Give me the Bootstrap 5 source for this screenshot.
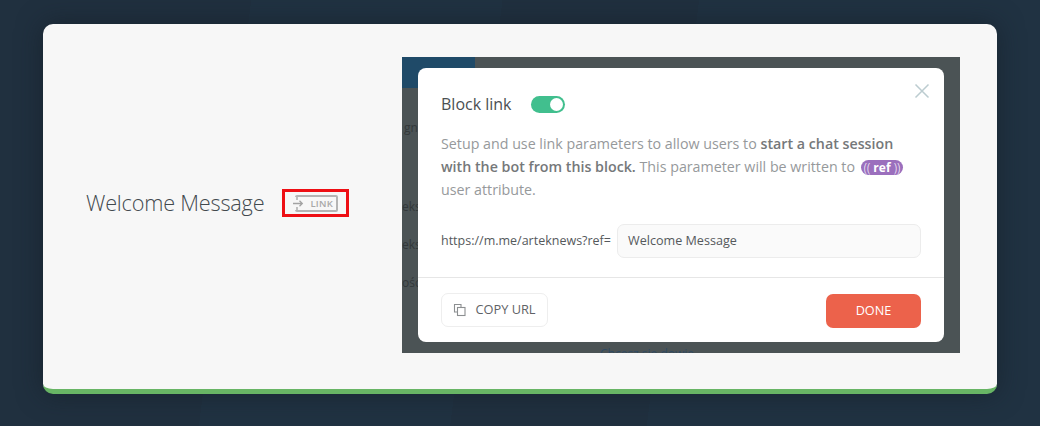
<!DOCTYPE html>
<html lang="en">
<head>
  <meta charset="UTF-8" />
  <meta name="viewport" content="width=device-width, initial-scale=1" />
  <title>Block link</title>
  <link href="https://cdn.jsdelivr.net/npm/bootstrap@5.3.3/dist/css/bootstrap.min.css" rel="stylesheet" />
  <style>
    body { background: linear-gradient(97deg, #20303f 0 23%, #203242 23% 46%, #20303f 46% 64%, #203242 64% 100%); font-family: "Open Sans", "Noto Sans", sans-serif; height: 426px; overflow: hidden; padding: 24px 43px 0; }
    .slide { height: 370px; width: 954px; background: #f7f7f7; border-bottom: 5px solid #68b565; border-radius: 10px; box-shadow: 0 0 26px rgba(20,28,36,.6); padding: 33px 37px 0 43px; }
    .title-text { font-size: 21.7px; font-weight: 300; color: #42494e; letter-spacing: -.2px; margin-right: 18px; white-space: nowrap; }
    .link-frame { width: 67px; height: 28px; border: 3px solid #ee0f14; }
    .link-tag { width: 43px; height: 17px; border: 2px solid #b4b4b4; border-radius: 2px; margin-left: 10px; font-size: 9.5px; font-weight: 600; color: #a8a8a8; letter-spacing: .3px; padding-left: 13px; line-height: 13px; position: relative; }
    .link-tag svg { position: absolute; left: -4px; top: 0; background: #f7f7f7; }
    .left-part { width: 316px; height: 292px; }
    .shot { width: 558px; height: 296px; background: #4b5355; position: relative; overflow: hidden; padding: 11px 16px; }
    .shot-blue { position: absolute; left: 0; top: 0; width: 73px; height: 31px; background: #1f4a68; }
    .shot-bit { position: absolute; font-size: 12px; color: #33393b; }
    .dlg { position: relative; background: #fff; border-radius: 8px; height: 274px; width: 526px; }
    .dlg-top { padding: 25px 23px 0; height: 210px; border-bottom: 1px solid #e6e6e6; }
    .dlg-title { font-size: 16px; color: #4b4f52; line-height: 22px; margin-right: 19px; }
    .toggler { width: 34px; height: 17px; border-radius: 9px; background: #41bf8e; position: relative; margin-top: 1px; }
    .toggler::after { content: ""; position: absolute; right: 2px; top: 2px; width: 13px; height: 13px; border-radius: 50%; background: #fff; }
    .dlg-close { position: absolute; right: 14px; top: 15px; line-height: 0; }
    .dlg-text { font-size: 14.25px; line-height: 23px; color: #96999b; margin: 17px 0 0; }
    .dlg-text b { color: #75787a; font-weight: 600; }
    .ref-pill { display: inline-block; background: #9b6fbd; color: #fff; font-size: 12px; font-weight: 700; line-height: 15px; border-radius: 8px; padding: 0 3px; margin-left: 2px; }
    .ref-pill i { font-style: normal; font-weight: 300; letter-spacing: 0; }
    .url-row { margin-top: 23px; font-size: 12.5px; color: #55595c; }
    .url-label { width: 176px; white-space: nowrap; }
    .url-input { width: 304px; height: 34px; border: 1px solid #ececec; border-radius: 7px; background: #fafafa; font-size: 12.6px; color: #55595c; padding: 0 10px; line-height: 32px; }
    .dlg-bottom { padding: 16px 23px 0; }
    .copy-btn { width: 107px; height: 34px; border: 1px solid #eee; border-radius: 7px; background: #fff; font-size: 12.8px; color: #5f6366; padding: 0; margin-top: -1px; }
    .done-btn { width: 95px; height: 34px; border: 0; border-radius: 7px; background: #ec624b; color: #fff; font-size: 12.7px; padding: 0; }
  </style>
</head>
<body>
  <div class="slide d-flex">
    <div class="left-part d-flex align-items-center">
      <span class="title-text">Welcome Message</span>
      <div class="link-frame d-flex align-items-center">
        <div class="link-tag">
          <svg width="13" height="13" viewBox="0 0 13 13" fill="none" stroke="#a3a3a3" stroke-width="1.3"><path d="M0 6.500h9M6.500 3.700 9.300 6.500 6.500 9.300M4 0v3M4 10v3"/></svg>
          LINK
        </div>
      </div>
    </div>
    <div class="shot">
      <div class="shot-blue"></div>
      <span class="shot-bit" style="left:2px;top:62px">gn</span>
      <span class="shot-bit" style="left:0;top:141px">eks</span>
      <span class="shot-bit" style="left:0;top:179px">eks</span>
      <span class="shot-bit" style="left:0;top:217px">ośc</span>
      <span class="shot-bit" style="left:198px;top:288px;color:#2f4a63">Chcesz się dowie</span>
      <div class="dlg">
        <div class="dlg-top">
          <div class="d-flex align-items-center">
            <span class="dlg-title">Block link</span>
            <span class="toggler"></span>
          </div>
          <p class="dlg-text">Setup and use link parameters to allow users to <b>start a chat session with the bot from this block.</b> This parameter will be written to <span class="ref-pill"><i>((</i> ref <i>))</i></span> user attribute.</p>
          <div class="url-row d-flex align-items-center">
            <span class="url-label">https://m.me/arteknews?ref=</span>
            <div class="url-input">Welcome Message</div>
          </div>
        </div>
        <div class="dlg-bottom d-flex justify-content-between">
          <button type="button" class="copy-btn d-flex align-items-center justify-content-center gap-2">
            <svg width="14" height="14" viewBox="0 0 14 14" fill="none" stroke="#8c8f91" stroke-width="1.1"><path d="M4 1.500H1.500V9H4"/><path d="M1.500 1.500H8V4"/><rect x="4.500" y="4.500" width="7.500" height="8"/></svg>
            COPY URL
          </button>
          <button type="button" class="done-btn">DONE</button>
        </div>
        <div class="dlg-close">
          <svg width="16" height="16" viewBox="0 0 16 16" stroke="#bcccd0" stroke-width="1.5"><path d="M1.500 1.500 14.500 14.500M14.500 1.500 1.500 14.500"/></svg>
        </div>
      </div>
    </div>
  </div>
  <script src="https://cdn.jsdelivr.net/npm/bootstrap@5.3.3/dist/js/bootstrap.bundle.min.js"></script>
</body>
</html>
